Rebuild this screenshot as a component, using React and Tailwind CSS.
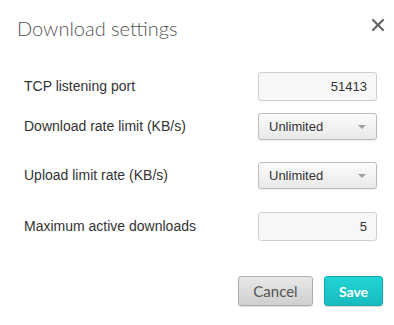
import { X } from 'lucide-react';

const LABEL = 'text-[14px] text-[#333] font-["Liberation_Sans",Arial,sans-serif]';

function Row({ label, children, className }) {
  return (
    <div className={`flex items-center justify-between ${className}`}>
      <span className={LABEL}>{label}</span>
      {children}
    </div>
  );
}

function NumberField({ value }) {
  return (
    <div className='flex h-[29px] w-[119px] items-center justify-end rounded-[3px] border border-[#cfcfcf] bg-[#f7f7f7] pr-[9px] font-["Liberation_Sans",Arial,sans-serif] text-[13px] text-[#333]'>
      {value}
    </div>
  );
}

function SelectField({ value }) {
  return (
    <div className='flex h-[27px] w-[119px] items-center justify-between rounded-[3px] border border-[#bdbdbd] bg-gradient-to-b from-[#fcfcfc] to-[#e9e9e9] pl-[10px] pr-[10px] font-["Liberation_Sans",Arial,sans-serif] text-[13px] text-[#333] shadow-[0_1px_1px_rgba(0,0,0,0.08)]'>
      <span>{value}</span>
      <span className="h-0 w-0 border-x-[4px] border-t-[4px] border-x-transparent border-t-[#a0a0a0]" />
    </div>
  );
}

export default function App() {
  return (
    <div className="h-[325px] w-[394px] bg-white">
      <div className="flex items-start justify-between pl-[17px] pr-[6px] pt-[14px]">
        <h1 className='font-["Lato",sans-serif] text-[20px] font-light leading-[28px] text-[#555]'>Download settings</h1>
        <button type="button" className="mt-[1px] text-[#666]">
          <X size={20} strokeWidth={2.6} />
        </button>
      </div>

      <div className="pl-[24px] pr-[17px] pt-[30px]">
        <Row label="TCP listening port">
          <NumberField value="51413" />
        </Row>
        <Row label="Download rate limit (KB/s)" className="mt-[12px]">
          <SelectField value="Unlimited" />
        </Row>
        <Row label="Upload limit rate (KB/s)" className="mt-[22px]">
          <SelectField value="Unlimited" />
        </Row>
        <Row label="Maximum active downloads" className="mt-[23px]">
          <NumberField value="5" />
        </Row>
      </div>

      <div className="flex justify-end gap-[11px] pr-[11px] pt-[35px]">
        <button
          type="button"
          className='h-[30px] w-[75px] rounded-[3px] border border-[#aeaeae] bg-gradient-to-b from-[#e8e8e8] to-[#cfcfcf] font-["Lato",sans-serif] text-[15px] text-[#555] shadow-[0_1px_1px_rgba(0,0,0,0.15)]'
        >
          Cancel
        </button>
        <button
          type="button"
          className='h-[30px] w-[59px] rounded-[3px] border border-[#14a9ab] bg-gradient-to-b from-[#21d3d5] to-[#17bcbe] font-["Lato",sans-serif] text-[14px] font-bold text-white shadow-[0_1px_1px_rgba(0,0,0,0.15)]'
        >
          Save
        </button>
      </div>
    </div>
  );
}
